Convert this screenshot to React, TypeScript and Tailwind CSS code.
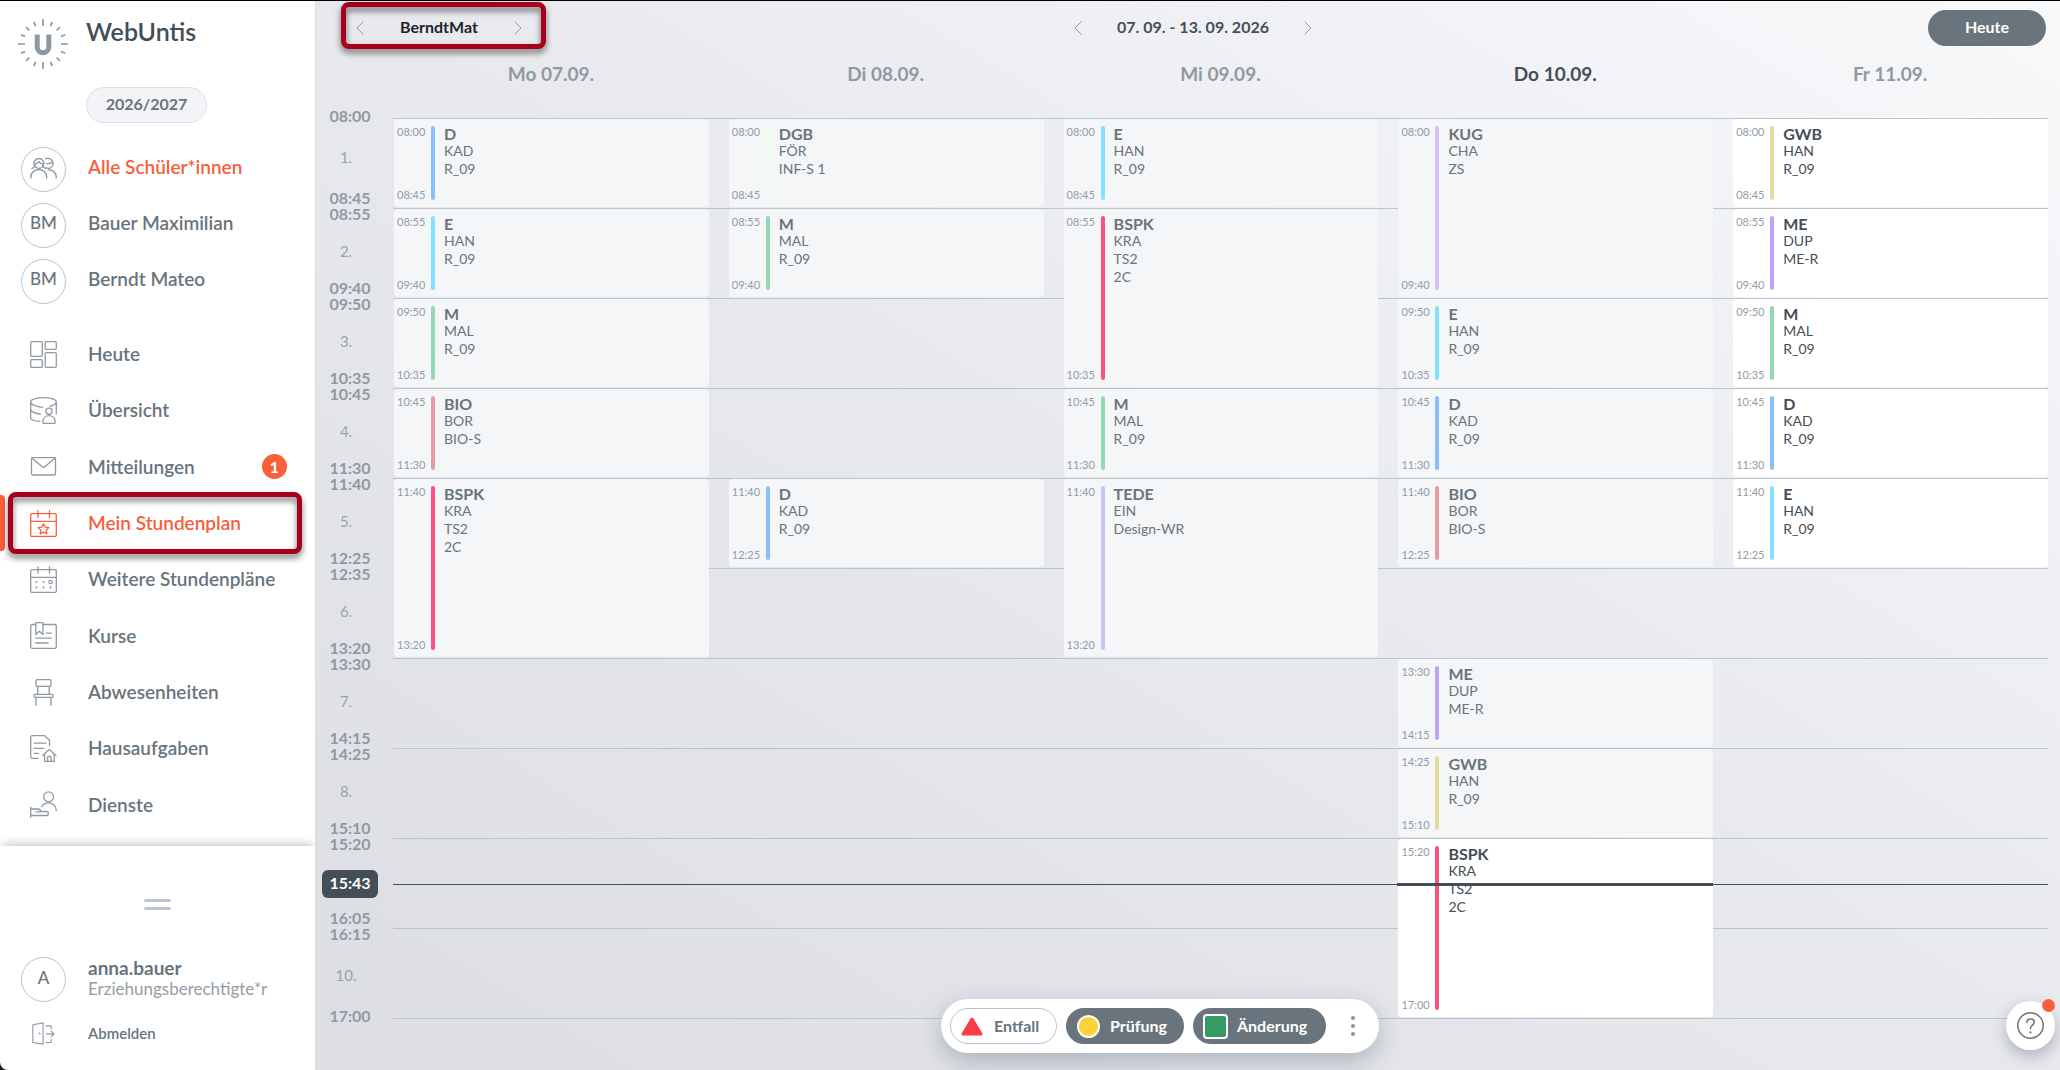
import { useState } from 'react';
import type { ReactNode } from 'react';
import clsx from 'clsx';

type Lesson = {
  day: number;
  row: number;
  span?: number;
  subject: string;
  lines: string[];
  color: string;
  upcoming?: boolean;
};

const COLORS = {
  D: 'bg-[#8abfff]',
  E: 'bg-[#82e1ff]',
  M: 'bg-[#94d8b4]',
  BIO: 'bg-[#e79ba3]',
  BSPK: 'bg-[#f9527f]',
  DGB: 'bg-[#e9fdea]',
  KUG: 'bg-[#d2c2f9]',
  TEDE: 'bg-[#c9c3f6]',
  ME: 'bg-[#bfa3f8]',
  GWB: 'bg-[#e4dc9a]',
};

const DAYS = ['Mo 07.09.', 'Di 08.09.', 'Mi 09.09.', 'Do 10.09.', 'Fr 11.09.'];
const TODAY = 3;

const PERIODS = [
  ['08:00', '08:45'],
  ['08:55', '09:40'],
  ['09:50', '10:35'],
  ['10:45', '11:30'],
  ['11:40', '12:25'],
  ['12:35', '13:20'],
  ['13:30', '14:15'],
  ['14:25', '15:10'],
  ['15:20', '16:05'],
  ['16:15', '17:00'],
];

const NOW = '15:43';
const NOW_ROW = 8;

const LESSONS: Lesson[] = [
  { day: 0, row: 0, subject: 'D', lines: ['KAD', 'R_09'], color: COLORS.D },
  { day: 0, row: 1, subject: 'E', lines: ['HAN', 'R_09'], color: COLORS.E },
  { day: 0, row: 2, subject: 'M', lines: ['MAL', 'R_09'], color: COLORS.M },
  { day: 0, row: 3, subject: 'BIO', lines: ['BOR', 'BIO-S'], color: COLORS.BIO },
  { day: 0, row: 4, span: 2, subject: 'BSPK', lines: ['KRA', 'TS2', '2C'], color: COLORS.BSPK },
  { day: 1, row: 0, subject: 'DGB', lines: ['FÖR', 'INF-S 1'], color: COLORS.DGB },
  { day: 1, row: 1, subject: 'M', lines: ['MAL', 'R_09'], color: COLORS.M },
  { day: 1, row: 4, subject: 'D', lines: ['KAD', 'R_09'], color: COLORS.D },
  { day: 2, row: 0, subject: 'E', lines: ['HAN', 'R_09'], color: COLORS.E },
  { day: 2, row: 1, span: 2, subject: 'BSPK', lines: ['KRA', 'TS2', '2C'], color: COLORS.BSPK },
  { day: 2, row: 3, subject: 'M', lines: ['MAL', 'R_09'], color: COLORS.M },
  { day: 2, row: 4, span: 2, subject: 'TEDE', lines: ['EIN', 'Design-WR'], color: COLORS.TEDE },
  { day: 3, row: 0, span: 2, subject: 'KUG', lines: ['CHA', 'ZS'], color: COLORS.KUG },
  { day: 3, row: 2, subject: 'E', lines: ['HAN', 'R_09'], color: COLORS.E },
  { day: 3, row: 3, subject: 'D', lines: ['KAD', 'R_09'], color: COLORS.D },
  { day: 3, row: 4, subject: 'BIO', lines: ['BOR', 'BIO-S'], color: COLORS.BIO },
  { day: 3, row: 6, subject: 'ME', lines: ['DUP', 'ME-R'], color: COLORS.ME },
  { day: 3, row: 7, subject: 'GWB', lines: ['HAN', 'R_09'], color: COLORS.GWB },
  { day: 3, row: 8, span: 2, subject: 'BSPK', lines: ['KRA', 'TS2', '2C'], color: COLORS.BSPK, upcoming: true },
  { day: 4, row: 0, subject: 'GWB', lines: ['HAN', 'R_09'], color: COLORS.GWB, upcoming: true },
  { day: 4, row: 1, subject: 'ME', lines: ['DUP', 'ME-R'], color: COLORS.ME, upcoming: true },
  { day: 4, row: 2, subject: 'M', lines: ['MAL', 'R_09'], color: COLORS.M, upcoming: true },
  { day: 4, row: 3, subject: 'D', lines: ['KAD', 'R_09'], color: COLORS.D, upcoming: true },
  { day: 4, row: 4, subject: 'E', lines: ['HAN', 'R_09'], color: COLORS.E, upcoming: true },
];

const minutes = (time: string) => {
  const [h, m] = time.split(':').map(Number);
  return h * 60 + m;
};

const Icon = ({ children, className = 'size-[27px]' }: { children: ReactNode; className?: string }) => (
  <svg
    viewBox="0 0 27 27"
    className={className}
    fill="none"
    stroke="currentColor"
    strokeWidth="1.3"
    strokeLinecap="round"
    strokeLinejoin="round"
    aria-hidden="true"
  >
    {children}
  </svg>
);

const CalendarFrame = () => (
  <>
    <rect x="0.7" y="3.7" width="25.6" height="22.6" rx="1.2" />
    <path d="M0.7 11.3h25.6M8 0.7v6.6M19.5 0.7v6.6" />
  </>
);

const NAV_ITEMS = [
  {
    label: 'Heute',
    icon: (
      <Icon>
        <rect x="0.7" y="0.7" width="11.6" height="14.6" rx="1.2" />
        <rect x="0.7" y="18.7" width="11.6" height="7.6" rx="1.2" />
        <rect x="15.2" y="0.7" width="11.1" height="7.6" rx="1.2" />
        <rect x="15.2" y="11.7" width="11.1" height="14.6" rx="1.2" />
      </Icon>
    ),
  },
  {
    label: 'Übersicht',
    icon: (
      <Icon>
        <path d="M0.7 4.7C0.7 2.4 6.4 0.7 13.5 0.7S26.3 2.4 26.3 4.7C26.3 6.7 23.9 8.3 20 9.2M0.7 4.7C0.7 7.2 6 9.8 12.5 10.3M0.7 4.7v16c0 2 4.2 3.4 9.3 3.7M0.7 12.3c0 2.2 4.6 4.4 9.8 4.8M26.3 4.7v12" />
        <circle cx="19" cy="14.3" r="3.1" />
        <path d="M13 26.3v-2.1c0-3.3 2.6-5.6 6-5.6s6 2.3 6 5.6v2.1z" />
      </Icon>
    ),
  },
  {
    label: 'Mitteilungen',
    badge: 1,
    icon: (
      <Icon>
        <rect x="1.5" y="4.7" width="24" height="17.3" rx="1.2" />
        <path d="M2 5.2l10 8.2c0.9 0.8 2.1 0.8 3 0l10-8.2" />
      </Icon>
    ),
  },
  {
    label: 'Mein Stundenplan',
    icon: (
      <Icon>
        <CalendarFrame />
        <path d="M13.5 13.8l1.7 3.3 3.6 0.5-2.6 2.6 0.6 3.6-3.3-1.7-3.3 1.7 0.6-3.6-2.6-2.6 3.6-0.5z" />
      </Icon>
    ),
  },
  {
    label: 'Weitere Stundenpläne',
    icon: (
      <Icon>
        <CalendarFrame />
        <path d="M6.5 16v0.1M13.5 16v0.1M6.5 21.3v0.1M13.5 21.3v0.1M20.5 21.3v0.1" strokeWidth="2" />
        <circle cx="20.5" cy="16" r="1.6" />
      </Icon>
    ),
  },
  {
    label: 'Kurse',
    icon: (
      <Icon>
        <path d="M5.8 2.5H2.2C1.3 2.5 0.7 3.1 0.7 4v20.8c0 0.9 0.6 1.5 1.5 1.5h22.6c0.9 0 1.5-0.6 1.5-1.5V4c0-0.9-0.6-1.5-1.5-1.5H13" />
        <path d="M5.8 0.7H13v11.8l-3.6-3.2-3.6 3.2zM16.3 11.2h5M5.8 16.2h15.5M5.8 21h12.4" />
      </Icon>
    ),
  },
  {
    label: 'Abwesenheiten',
    icon: (
      <Icon>
        <rect x="6" y="0.7" width="15" height="6.6" rx="1.2" />
        <rect x="4" y="15.3" width="19" height="3" rx="1" />
        <path d="M7.8 7.3v8M19.2 7.3v8M6 18.3v8M21 18.3v8" />
      </Icon>
    ),
  },
  {
    label: 'Hausaufgaben',
    icon: (
      <Icon>
        <path d="M8.2 23.3H2.2c-0.9 0-1.5-0.6-1.5-1.5V2.2c0-0.9 0.6-1.5 1.5-1.5h12.6l4.7 4.6v5.4M4.3 8.2h11.6M4.3 13.3h9.2M4.3 18.4h4.2" />
        <path d="M12.7 20.6l6.6-6 6.7 6M14.6 19.2v7.1h9.6v-7.1M17.6 26v-3.7c0-0.6 0.5-1 1-1h1.5c0.6 0 1 0.5 1 1V26" />
      </Icon>
    ),
  },
  {
    label: 'Dienste',
    icon: (
      <Icon>
        <circle cx="18.6" cy="5.8" r="4.9" />
        <path d="M11.8 15.6c1.3-2.3 3.8-3.8 6.8-3.8 4.3 0 7.7 3.4 7.7 7.8" />
        <path d="M0.7 16.2v10.1M0.7 18h7.5c1.4 0 2.3 1 2.3 2.5h6.3c1 0 1.6 0.7 1.6 1.7s-0.8 2.3-2.2 2.3H0.7M6.2 20.8h4.3" />
      </Icon>
    ),
  },
];

// ring of short rays around the U
const RAYS = Array.from({ length: 16 }, (_, i) => i * 22.5);

const Logo = () => (
  <svg viewBox="0 0 50 50" className="size-[50px] shrink-0 text-[#8d98a3]" aria-hidden="true">
    {RAYS.map((angle) => (
      <path
        key={angle}
        d={angle % 90 === 0 ? 'M25 0v7' : 'M25 1v4.6'}
        stroke="currentColor"
        strokeWidth="1.7"
        transform={`rotate(${angle} 25 25)`}
      />
    ))}
    <path d="M19.2 15.5v12.2a5.8 6 0 0 0 11.6 0V15.5" fill="none" stroke="currentColor" strokeWidth="5" />
  </svg>
);

const Avatar = ({ children }: { children: ReactNode }) => (
  <span className="flex size-[45px] shrink-0 items-center justify-center rounded-full border border-[#bcc5cc] text-base text-[#69747c]">
    {children}
  </span>
);

const Highlight = ({ className }: { className: string }) => (
  <span
    className={clsx(
      'pointer-events-none absolute rounded-lg border-5 border-[#a6001c] drop-shadow-[0_4px_3px_rgba(0,0,0,0.55)]',
      className
    )}
  />
);

const Chevron = ({ direction, label }: { direction: 'left' | 'right'; label: string }) => (
  <button type="button" aria-label={label} className="flex size-6 items-center justify-center text-[#8f9aa3]">
    <svg viewBox="0 0 8 14" className="h-[14px] w-2" fill="none" stroke="currentColor" aria-hidden="true">
      <path d={direction === 'left' ? 'M7.5 0.5L1 7l6.5 6.5' : 'M0.5 0.5L7 7l-6.5 6.5'} />
    </svg>
  </button>
);

const Sidebar = () => {
  const [active, setActive] = useState('Mein Stundenplan');

  return (
    <aside className="flex w-[315px] shrink-0 flex-col bg-white text-[19px] font-semibold text-[#69747c]">
      <div className="flex h-[86px] items-start gap-[18px] pt-[18px] pl-[18px]">
        <Logo />
        <h1 className="text-[25px] leading-6 font-semibold text-[#434e56]">WebUntis</h1>
      </div>
      <button
        type="button"
        className="ml-[86px] h-9 w-[121px] rounded-full border border-[#dbdfe4] bg-[#f3f4f7] pb-0.5 text-base font-bold"
      >
        2026/2027
      </button>

      <ul className="mt-[18px] pl-[21px]">
        <li>
          <button type="button" className="flex h-14 w-full items-center gap-[22px] text-[#f95f3b]">
            <Avatar>
              <span className="text-[#8a959f]">
                <Icon>
                  <path d="M0.9 22v-1.3c0-4 3.2-7 7.9-7s7.9 3 7.9 7V22M5 9.5c-0.7 1.5-1.7 2.7-3 3.2M12.8 9.5c0.7 1.5 1.7 2.7 3 3.2" />
                  <circle cx="8.9" cy="7.4" r="4.9" />
                  <path d="M4.2 7.8c2.2 0.3 3.8-0.5 4.7-2.3 0.9 1.8 2.5 2.6 4.7 2.3M15.5 2.7c4-1.3 7.6 0.9 7.6 5 0 3.7-4 5.7-6.8 4M16.5 7.6c3 0.2 5.1-0.7 6.3-1.7M18.3 13.9c4.7-0.4 7.9 2.8 7.9 6.8V22" />
                </Icon>
              </span>
            </Avatar>
            <span className="pb-[3px]">Alle Schüler*innen</span>
          </button>
        </li>
        {['Bauer Maximilian', 'Berndt Mateo'].map((name) => (
          <li key={name}>
            <button type="button" className="flex h-14 w-full items-center gap-[22px]">
              <Avatar>
                <span className="pb-1 text-[17px] font-medium">BM</span>
              </Avatar>
              <span className="pb-[3px]">{name}</span>
            </button>
          </li>
        ))}
      </ul>

      <nav className="flex grow flex-col pt-[17px] pb-[13px]">
        {NAV_ITEMS.map(({ label, icon, badge }) => (
          <a
            key={label}
            href="#"
            onClick={() => setActive(label)}
            className={clsx('relative flex grow items-center pl-[30px]', active === label && 'text-[#f95f3b]')}
          >
            {active === label && (
              <>
                <span className="absolute inset-y-0 left-0 w-[5px] rounded-r bg-[#f95f3b]" />
                <Highlight className="-top-[3px] right-[13px] -bottom-[3px] left-2" />
              </>
            )}
            <span className={active === label ? 'text-[#f95f3b]' : 'text-[#8f9aa5]'}>{icon}</span>
            <span className="ml-[31px]">{label}</span>
            {badge && (
              <span className="mr-7 ml-auto flex size-[25px] items-center justify-center rounded-full bg-[#f95f3b] text-base font-bold text-white">
                {badge}
              </span>
            )}
          </a>
        ))}
      </nav>

      <div className="flex h-[224px] flex-col rounded-bl-lg shadow-[0_-4px_10px_-2px_rgba(0,0,0,0.22)]">
        <button type="button" aria-label="Menü ziehen" className="mt-[53px] flex flex-col gap-[5px] self-center">
          <span className="h-[3px] w-[27px] rounded-full bg-[#bfc7ce]" />
          <span className="h-[3px] w-[27px] rounded-full bg-[#bfc7ce]" />
        </button>
        <div className="mt-[47px] flex items-center gap-[22px] pl-[21px]">
          <Avatar>
            <span className="pb-1 text-[17px] font-medium">A</span>
          </Avatar>
          <div className="pb-[3px]">
            <p className="text-[19px] leading-[21px] font-bold">anna.bauer</p>
            <p className="text-[17px] leading-[21px] font-normal text-[#929da8]">Erziehungsberechtigte*r</p>
          </div>
        </div>
        <a href="#" className="mt-5 flex items-center gap-[33px] pl-8 text-[15px]">
          <span className="text-[#8f9aa5]">
            <Icon className="size-[23px]">
              <path d="M1 3.3L13 1v25L1 24zM16.5 4.5H22.5V8M16.5 24H22.5V20.5M17 14h9M22.5 10.8l3.5 3.2-3.5 3.2" />
              <path d="M9 13.4v0.2" strokeWidth="2" />
            </Icon>
          </span>
          Abmelden
        </a>
      </div>
    </aside>
  );
};

const TimeGutter = () => (
  <div className="-mt-0.5 w-[78px] shrink-0">
    {PERIODS.map(([start, end], i) => (
      <div key={start} className="relative flex h-[90px] w-[70px] flex-col font-bold text-[#8f9aa3]">
        <time className={clsx('text-center leading-4', i === 0 && '-mt-2')}>{start}</time>
        <span className="flex grow items-center justify-center pr-2 text-[15px] font-normal text-[#98a3ac]">
          {i !== NOW_ROW && `${i + 1}.`}
        </span>
        <time className={clsx('text-center leading-4', i === PERIODS.length - 1 && '-mb-2')}>{end}</time>
        {i === NOW_ROW && (
          <time className="absolute top-[34px] left-[7px] h-7 w-14 rounded-md bg-[#434e56] text-center leading-[25px] text-white">
            {NOW}
          </time>
        )}
      </div>
    ))}
  </div>
);

const LessonCard = ({ lesson }: { lesson: Lesson }) => {
  const { day, row, span = 1, subject, lines, color, upcoming } = lesson;

  return (
    <button
      type="button"
      className={clsx(
        'z-10 mt-px mb-px ml-px flex rounded py-[7px] pl-[3px] text-left',
        upcoming ? 'bg-white text-[#434e56]' : 'bg-[#f4f6f8] text-[#69747c]'
      )}
      style={{ gridColumn: day + 1, gridRow: `${row + 1} / span ${span}` }}
    >
      <span className="flex w-[34px] flex-col justify-between self-stretch text-[11px] leading-[11px] text-[#929ca5]">
        <time>{PERIODS[row][0]}</time>
        <time>{PERIODS[row + span - 1][1]}</time>
      </span>
      <span className={clsx('w-1 self-stretch rounded-full', color)} />
      <span className="ml-[9px] block self-start text-sm leading-[18px]">
        <strong className="block text-base leading-4 font-bold">{subject}</strong>
        {lines.map((line) => (
          <span key={line} className="block">
            {line}
          </span>
        ))}
      </span>
    </button>
  );
};

const Timetable = () => {
  const [start, end] = PERIODS[NOW_ROW];
  const nowOffset = ((minutes(NOW) - minutes(start)) / (minutes(end) - minutes(start))) * 100;

  return (
    <div className="grid grow grid-cols-5 grid-rows-[repeat(10,90px)] gap-x-[19px] border-b border-[#bac5ce]">
      {PERIODS.map(([from], i) => (
        <div key={from} className="col-span-full border-t border-[#bac5ce]" style={{ gridRow: i + 1 }} />
      ))}
      {LESSONS.map((lesson) => (
        <LessonCard key={`${lesson.day}-${lesson.row}`} lesson={lesson} />
      ))}
      <div className="relative col-span-full" style={{ gridRow: NOW_ROW + 1 }}>
        <span className="absolute inset-x-0 h-px bg-[#434e56]" style={{ top: `${nowOffset}%` }} />
      </div>
      <div className="relative z-20" style={{ gridRow: NOW_ROW + 1, gridColumn: TODAY + 1 }}>
        <span className="absolute inset-x-0 -mt-px h-[3px] bg-[#434e56]" style={{ top: `${nowOffset}%` }} />
      </div>
    </div>
  );
};

const Legend = () => (
  <div className="absolute inset-x-0 bottom-[17px] z-30 flex justify-center pr-14">
    <div className="flex h-[54px] items-center gap-[9px] rounded-full bg-white pr-4 pl-[9px] text-base font-bold shadow-[0_8px_24px_rgba(60,75,90,0.32)]">
      <button
        type="button"
        className="flex h-9 w-[107px] items-center gap-[11px] rounded-full border border-[#bcc5cc] pl-[10px] text-[#69747c]"
      >
        <svg viewBox="0 0 22 19" className="h-[19px] w-[22px]" aria-hidden="true">
          <path d="M11 2L20 17H2z" fill="#f93c46" stroke="#f93c46" strokeWidth="3" strokeLinejoin="round" />
        </svg>
        Entfall
      </button>
      <button type="button" className="flex h-9 w-[118px] items-center gap-[10px] rounded-full bg-[#69747c] pl-[11px] text-white">
        <span className="size-[23px] rounded-full border-2 border-white bg-[#fbd338]" />
        Prüfung
      </button>
      <button type="button" className="flex h-9 w-[133px] items-center gap-[9px] rounded-full bg-[#69747c] pl-[10px] text-white">
        <span className="size-[25px] rounded border-2 border-white bg-[#359c63]" />
        Änderung
      </button>
      <button type="button" aria-label="Mehr" className="ml-2 flex h-9 w-5 flex-col items-center justify-center gap-1">
        <span className="size-1 rounded-full bg-[#8591a0]" />
        <span className="size-1 rounded-full bg-[#8591a0]" />
        <span className="size-1 rounded-full bg-[#8591a0]" />
      </button>
    </div>
  </div>
);

const App = () => {
  return (
    <div className="flex min-h-screen border-t border-black bg-[#14202a] font-['Lato',sans-serif]">
      <div className="flex grow overflow-hidden rounded-bl-lg">
        <Sidebar />
        <main className="relative flex grow flex-col border-l border-[#d9dce3] bg-linear-to-tr from-[#dcdee4] via-[#e8e9ed] to-[#f8f9fb]">
          <header className="grid h-[54px] grid-cols-[1fr_auto_1fr] items-center pr-[14px] pl-6">
            <div className="relative ml-2 flex w-[182px] items-center justify-between text-base font-bold text-[#1d2329]">
              <Chevron direction="left" label="Vorherige Person" />
              <span className="pb-[3px]">BerndtMat</span>
              <Chevron direction="right" label="Nächste Person" />
              <Highlight className="-top-[13px] -right-4 -bottom-[7px] -left-[7px]" />
            </div>
            <div className="flex w-[254px] items-center justify-between text-base font-bold text-[#434e56]">
              <Chevron direction="left" label="Vorherige Woche" />
              <span className="pb-[3px]">07. 09. - 13. 09. 2026</span>
              <Chevron direction="right" label="Nächste Woche" />
            </div>
            <button
              type="button"
              className="h-9 w-[118px] justify-self-end rounded-full bg-[#69747c] pb-0.5 text-base font-bold text-white"
            >
              Heute
            </button>
          </header>

          <div className="mr-3 ml-[77px] grid h-[63px] grid-cols-5 gap-x-[19px] pt-[5px] text-[19px] leading-7 font-bold text-[#8f9aa3]">
            {DAYS.map((day, i) => (
              <h2 key={day} className={clsx('text-center', i === TODAY && 'text-[#434e56]')}>
                {day}
              </h2>
            ))}
          </div>

          <div className="mr-3 -ml-px flex">
            <TimeGutter />
            <Timetable />
          </div>

          <Legend />

          <button
            type="button"
            aria-label="Hilfe"
            className="absolute right-[5px] bottom-5 z-30 flex size-[49px] items-center justify-center rounded-full bg-white text-[#69747c] shadow-[0_6px_16px_rgba(60,75,90,0.35)]"
          >
            <Icon>
              <circle cx="13.5" cy="13.5" r="12.7" strokeWidth="1.5" />
              <path d="M9.8 10.6c0-2.3 1.6-3.7 3.8-3.7s3.7 1.4 3.7 3.4c0 2.7-3.8 2.9-3.8 6v0.5" strokeWidth="1.5" />
              <path d="M13.5 20.4v0.1" strokeWidth="2.2" />
            </Icon>
            <span className="absolute -top-[2px] right-0 size-[13px] rounded-full bg-[#f95f3b]" />
          </button>
        </main>
      </div>
    </div>
  );
};

export default App;
